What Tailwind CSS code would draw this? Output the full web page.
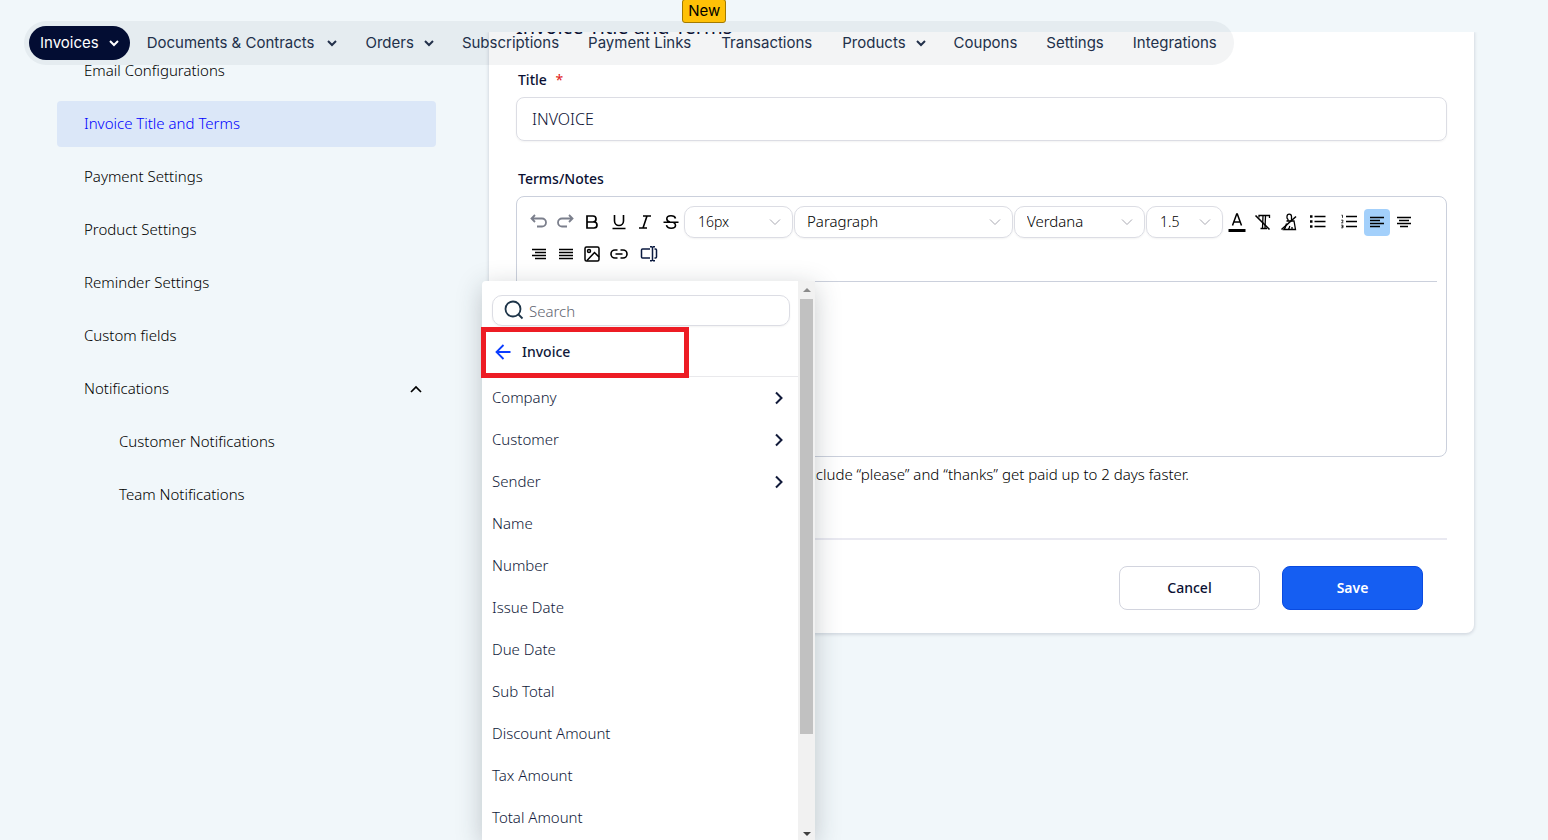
<!DOCTYPE html>
<html lang="en">
<head>
    <meta charset="UTF-8">
    <meta name="viewport" content="width=device-width, initial-scale=1.0">
    <title>Invoice Title and Terms</title>
    <script src="https://cdn.jsdelivr.net/npm/@tailwindcss/browser@4"></script>
</head>
<body class="h-screen overflow-hidden bg-[#f1f7fa] font-['Noto_Sans',sans-serif] text-sm text-[#0b1033]">
    <svg class="hidden">
        <symbol id="down" viewBox="0 0 10 10"><path d="M1 3l4 4 4-4" fill="none" stroke="currentColor" stroke-width="2"/></symbol>
        <symbol id="up" viewBox="0 0 12 12"><path d="M1 9l5-5 5 5" fill="none" stroke="currentColor" stroke-width="1.7"/></symbol>
        <symbol id="thin-down" viewBox="0 0 12 8"><path d="M1 1.5l5 5 5-5" fill="none" stroke="currentColor"/></symbol>
        <symbol id="right" viewBox="0 0 10 14"><path d="M2 1.5L7.5 7 2 12.5" fill="none" stroke="currentColor" stroke-width="2"/></symbol>
    </svg>

    <!-- Top navigation -->
    <header class="absolute inset-x-0 top-0 z-10 pl-6 pt-[21px] font-['Inter',sans-serif] text-[15px] text-[#22304a]">
        <nav class="flex h-11 w-max items-center rounded-full bg-[#1a2e35]/5 pl-[5px] pr-[17px]">
            <a href="#" class="mr-[17px] flex h-[34px] items-center gap-[10px] rounded-full bg-[#030d33] px-[11px] text-white">Invoices<svg class="size-[10px]"><use href="#down"/></svg></a>
            <a href="#" class="mr-[29px] flex items-center gap-3">Documents &amp; Contracts<svg class="size-[10px]"><use href="#down"/></svg></a>
            <a href="#" class="mr-7 flex items-center gap-[10px]">Orders<svg class="size-[10px]"><use href="#down"/></svg></a>
            <a href="#" class="mr-[29px]">Subscriptions</a>
            <a href="#" class="mr-[30px]">Payment Links</a>
            <a href="#" class="relative mr-[30px]">Transactions<span class="absolute -left-[39px] -top-[33px] rounded-[3px] border border-[#a37a00] bg-[#ffc107] px-[5px] text-black">New</span></a>
            <a href="#" class="mr-7 flex items-center gap-[10px]">Products<svg class="size-[10px]"><use href="#down"/></svg></a>
            <a href="#" class="mr-[29px]">Coupons</a>
            <a href="#" class="mr-[29px]">Settings</a>
            <a href="#">Integrations</a>
        </nav>
    </header>

    <div class="mt-8 flex h-full items-start overflow-hidden">
        <!-- Settings sidebar -->
        <aside class="ml-[57px] mr-[53px] flex w-[379px] shrink-0 flex-col gap-[7px] pt-4 text-[15px] font-light text-black">
            <a href="#" class="flex h-[46px] items-center px-[27px]">Email Configurations</a>
            <a href="#" class="flex h-[46px] items-center rounded-sm bg-[#dbe7f8] px-[27px] text-[#0000ff]">Invoice Title and Terms</a>
            <a href="#" class="flex h-[46px] items-center px-[27px]">Payment Settings</a>
            <a href="#" class="flex h-[46px] items-center px-[27px]">Product Settings</a>
            <a href="#" class="flex h-[46px] items-center px-[27px]">Reminder Settings</a>
            <a href="#" class="flex h-[46px] items-center px-[27px]">Custom fields</a>
            <button type="button" class="flex h-[46px] items-center justify-between pl-[27px] pr-[14px]">Notifications<svg class="size-3"><use href="#up"/></svg></button>
            <a href="#" class="flex h-[46px] items-center px-[62px]">Customer Notifications</a>
            <a href="#" class="flex h-[46px] items-center px-[62px]">Team Notifications</a>
        </aside>

        <!-- Form card -->
        <main class="mr-[74px] min-w-0 flex-1 rounded-b-lg bg-white px-[27px] pb-[23px] shadow-[0_1px_3px_1px_#d5dbe2]">
            <h1 class="-mt-[19px] h-7 text-xl leading-7">Invoice Title and Terms</h1>
            <form>
                <label for="title" class="mt-[29px] block pl-[2px] font-medium leading-5">Title <span class="ml-[5px] font-normal text-[#e02020]">*</span></label>
                <input id="title" value="INVOICE" class="mt-[7px] h-11 w-full rounded-lg border border-[#dcdde4] px-[15px] text-base font-light shadow-xs">
                <label for="terms" class="mt-7 block pl-[2px] font-medium leading-5">Terms/Notes</label>

                <div class="mt-[7px] rounded-lg border border-[#cbd0dc]">
                    <div class="mx-[9px] flex flex-wrap items-center border-b border-[#cbd0dc] pb-[11px] pt-[9px] text-black">
                        <button type="button" aria-label="Undo" class="grid h-8 w-[26px] place-items-center text-[#7b7f8c]">
                            <svg viewBox="0 0 18 18" class="size-[18px]" fill="none" stroke="currentColor" stroke-width="1.8"><path d="M5 2L1.500 5.500 5 9M2 5.500h10a4 4 0 0 1 0 8H7"/></svg>
                        </button>
                        <button type="button" aria-label="Redo" class="grid h-8 w-[26px] place-items-center text-[#7b7f8c]">
                            <svg viewBox="0 0 18 18" class="size-[18px]" fill="none" stroke="currentColor" stroke-width="1.8"><path d="M13 2l3.500 3.500L13 9M16 5.500H6a4 4 0 0 0 0 8h5"/></svg>
                        </button>
                        <button type="button" aria-label="Bold" class="grid h-8 w-[27px] place-items-center">
                            <svg viewBox="0 0 18 18" class="size-[18px]" fill="none" stroke="currentColor" stroke-width="1.7"><path d="M4 3h6a3 3 0 0 1 0 6H4zM4 9h7a3 3 0 0 1 0 6H4z"/></svg>
                        </button>
                        <button type="button" aria-label="Underline" class="grid h-8 w-[27px] place-items-center">
                            <svg viewBox="0 0 18 18" class="size-[18px]" fill="none" stroke="currentColor" stroke-width="1.6"><path d="M4.500 2v6a4.500 4.500 0 0 0 9 0V2M2.500 15.500h13"/></svg>
                        </button>
                        <button type="button" aria-label="Italic" class="grid h-8 w-[26px] place-items-center">
                            <svg viewBox="0 0 18 18" class="size-[18px]" fill="none" stroke="currentColor" stroke-width="1.6"><path d="M7 3h8M3 15h8M11 3L7 15"/></svg>
                        </button>
                        <button type="button" aria-label="Strikethrough" class="grid h-8 w-[26px] place-items-center">
                            <svg viewBox="0 0 18 18" class="size-[18px]" fill="none" stroke="currentColor" stroke-width="1.6"><path d="M13.500 5.500C13 3.500 11.500 2.800 9 2.800S4.800 4 4.800 5.800C4.800 7.500 6 8.500 8 9M1.500 9.200h15M11.500 9.500c1.500.7 2 1.600 2 2.700 0 1.800-1.700 3-4.300 3-2.700 0-4.400-1.200-4.700-3"/></svg>
                        </button>
                        <div class="relative mr-px h-8 w-[109px]">
                            <select aria-label="Font size" class="h-full w-full appearance-none rounded-[10px] border border-[#dcdde4] px-[13px] font-light text-black shadow-xs"><option>16px</option></select>
                            <svg class="pointer-events-none absolute right-3 top-3 h-2 w-3 text-[#a9a9b2]"><use href="#thin-down"/></svg>
                        </div>
                        <div class="relative mr-px h-8 w-[219px]">
                            <select aria-label="Block style" class="h-full w-full appearance-none rounded-[10px] border border-[#dcdde4] px-3 text-[15px] font-light text-black shadow-xs"><option>Paragraph</option></select>
                            <svg class="pointer-events-none absolute right-3 top-3 h-2 w-3 text-[#a9a9b2]"><use href="#thin-down"/></svg>
                        </div>
                        <div class="relative mr-px h-8 w-[131px]">
                            <select aria-label="Font family" class="h-full w-full appearance-none rounded-[10px] border border-[#dcdde4] px-3 text-[15px] font-light text-black shadow-xs"><option>Verdana</option></select>
                            <svg class="pointer-events-none absolute right-3 top-3 h-2 w-3 text-[#a9a9b2]"><use href="#thin-down"/></svg>
                        </div>
                        <div class="relative mr-px h-8 w-[77px]">
                            <select aria-label="Line height" class="h-full w-full appearance-none rounded-[10px] border border-[#dcdde4] px-[13px] font-light text-black shadow-xs"><option>1.5</option></select>
                            <svg class="pointer-events-none absolute right-3 top-3 h-2 w-3 text-[#a9a9b2]"><use href="#thin-down"/></svg>
                        </div>
                        <button type="button" aria-label="Text color" class="grid h-8 w-[26px] place-items-center">
                            <svg viewBox="0 0 18 20" class="h-5 w-[18px]" fill="none" stroke="currentColor" stroke-width="1.5"><path d="M4.500 13.500L8.700 2h.6l4.200 11.500M6 10h6"/><path d="M.500 18.500h17" stroke-width="3"/></svg>
                        </button>
                        <button type="button" aria-label="Clear formatting" class="grid h-8 w-[26px] place-items-center">
                            <svg viewBox="0 0 18 18" class="size-[18px]" fill="none" stroke="currentColor" stroke-width="1.300"><path d="M5 4.500V2.500h10.500v2.500M9 3L8.500 15M11.500 3L11 15M6.500 15.500H13"/><path d="M1.500 2.500L15.500 16.500" stroke-width="1.600"/></svg>
                        </button>
                        <button type="button" aria-label="Clear background" class="grid h-8 w-[26px] place-items-center">
                            <svg viewBox="0 0 18 18" class="size-[18px]" fill="none" stroke="currentColor" stroke-width="1.300"><path d="M8 8V6.500L7 5V3.500C7 2 7.800 1.200 9.200 1.200s2.300.8 2.300 2.300V7.500M6.500 8H14l1.500 8.500H4c1.500-1.500 2-4 2.500-6M8.500 16c1-1 1-2 1.200-3M12 16.500V14"/><path d="M1.500 16.500L16 3.500" stroke-width="1.600"/></svg>
                        </button>
                        <button type="button" aria-label="Bulleted list" class="grid h-8 w-8 place-items-center">
                            <svg viewBox="0 0 18 18" class="size-[18px]" fill="none" stroke="currentColor" stroke-width="1.500"><path d="M5.500 3.500h11M5.500 8.500h11M5.500 13.500h11"/><path d="M1 3.500h2.500M1 8.500h2.500M1 13.500h2.500" stroke-width="2.500"/></svg>
                        </button>
                        <button type="button" aria-label="Numbered list" class="grid h-8 w-[30px] place-items-center">
                            <svg viewBox="0 0 18 18" class="size-[18px]" fill="none" stroke="currentColor" stroke-width="1.500"><path d="M6 3.500h11M6 8.500h11M6 13.500h11"/><path d="M1.500 2.200h1v2.600M1.200 7.200h1.800v1.200l-1.500 1.400H3.300M1.200 12.200H3v2.600H1.200M1.700 13.500H3" stroke-width=".8"/></svg>
                        </button>
                        <button type="button" aria-label="Align left" class="grid h-[27px] w-[26px] place-items-center rounded bg-[#a3d0fb]">
                            <svg viewBox="0 0 16 16" class="size-4" fill="none" stroke="currentColor" stroke-width="1.500"><path d="M1 3.500h14M1 6.500h10M1 9.500h14M1 12.500h10"/></svg>
                        </button>
                        <button type="button" aria-label="Align center" class="grid h-8 w-7 place-items-center">
                            <svg viewBox="0 0 16 16" class="size-4" fill="none" stroke="currentColor" stroke-width="1.500"><path d="M1 3.500h14M3 6.500h10M1 9.500h14M4 12.500h8"/></svg>
                        </button>
                        <button type="button" aria-label="Align right" class="grid h-8 w-[26px] place-items-center">
                            <svg viewBox="0 0 16 16" class="size-4" fill="none" stroke="currentColor" stroke-width="1.500"><path d="M1 3.500h14M4 6.500h11M1 9.500h14M4 12.500h11"/></svg>
                        </button>
                        <button type="button" aria-label="Justify" class="grid h-8 w-[27px] place-items-center">
                            <svg viewBox="0 0 16 16" class="size-4" fill="none" stroke="currentColor" stroke-width="1.500"><path d="M1 3.500h14M1 6.500h14M1 9.500h14M1 12.500h14"/></svg>
                        </button>
                        <button type="button" aria-label="Image" class="grid h-8 w-[26px] place-items-center">
                            <svg viewBox="0 0 18 18" class="size-[18px]" fill="none" stroke="currentColor" stroke-width="1.500"><rect x="2" y="2" width="14" height="14" rx="1.500"/><circle cx="6" cy="6" r="1.500"/><path d="M4 15.500l7.500-8 4.500 4.500"/></svg>
                        </button>
                        <button type="button" aria-label="Link" class="grid h-8 w-7 place-items-center">
                            <svg viewBox="0 0 18 18" class="size-[18px]" fill="none" stroke="currentColor" stroke-width="1.600"><path d="M7.500 5H5a4 4 0 0 0 0 8h2.500M10.500 5H13a4 4 0 0 1 0 8h-2.500M5.500 9h7"/></svg>
                        </button>
                        <button type="button" aria-label="Insert variable" class="grid h-8 w-8 place-items-center text-[#0b1a40]">
                            <svg viewBox="0 0 18 18" class="size-[18px]" fill="none" stroke="currentColor" stroke-width="1.500"><path d="M10 4H2.500a1 1 0 0 0-1 1v7a1 1 0 0 0 1 1H10M14.500 4h1a1 1 0 0 1 1 1v7a1 1 0 0 1-1 1h-1M12.500 2v13M10 1.700h1.500l1 .8 1-.8H15M10 15.800h1.500l1-.8 1 .8H15"/></svg>
                        </button>
                    </div>
                    <textarea id="terms" class="block h-[174px] w-full resize-none rounded-lg px-4 py-3 outline-none"></textarea>
                </div>

                <p class="w-[673px] pt-[7px] text-right text-[15px] font-light leading-5 text-black">Invoices that include “please” and “thanks” get paid up to 2 days faster.</p>
                <div class="mt-[54px] flex justify-end gap-[22px] border-t-2 border-[#e9e9f1] pr-6 pt-[26px] font-medium">
                    <button type="button" class="h-11 w-[141px] rounded-lg border border-[#d2d4de] bg-white">Cancel</button>
                    <button type="submit" class="h-11 w-[141px] rounded-lg border border-[#0a4be0] bg-[#155ef2] font-semibold text-white">Save</button>
                </div>
            </form>
        </main>
    </div>

    <!-- Variable picker -->
    <div class="absolute bottom-0 left-[482px] top-[281px] flex w-[333px] rounded-tl bg-white text-[15px] font-light text-[#111a3a] shadow-[0_6px_26px_rgba(40,50,60,0.25)]">
        <div class="min-w-0 flex-1 overflow-hidden">
            <div class="relative ml-[10px] mr-2 mt-[14px]">
                <svg viewBox="0 0 20 20" class="absolute left-3 top-[5px] size-5 text-[#1d3448]" fill="none" stroke="currentColor" stroke-width="1.800"><circle cx="9" cy="9" r="7.500"/><path d="M14.500 14.500l4 4"/></svg>
                <input type="search" aria-label="Search" placeholder="Search" class="h-[31px] w-full rounded-[10px] border border-[#dcdde4] pl-9 pr-3 shadow-xs placeholder:text-[#5f6470]">
            </div>
            <div class="flex h-[51px] items-center gap-[11px] border-b border-[#e9e9ec] pl-[13px] pt-[2px]">
                <button type="button" aria-label="Back" class="text-[#0a3cff]"><svg viewBox="0 0 16 16" class="size-4" fill="none" stroke="currentColor" stroke-width="1.800"><path d="M8.500 1L1.500 8l7 7M1.500 8h14"/></svg></button>
                <span class="text-sm font-medium">Invoice</span>
            </div>
            <ul>
                <li><button type="button" class="flex h-[42px] w-full items-center justify-between pl-[10px] pr-[14px]">Company<svg class="h-[14px] w-[10px]"><use href="#right"/></svg></button></li>
                <li><button type="button" class="flex h-[42px] w-full items-center justify-between pl-[10px] pr-[14px]">Customer<svg class="h-[14px] w-[10px]"><use href="#right"/></svg></button></li>
                <li><button type="button" class="flex h-[42px] w-full items-center justify-between pl-[10px] pr-[14px]">Sender<svg class="h-[14px] w-[10px]"><use href="#right"/></svg></button></li>
                <li><button type="button" class="flex h-[42px] w-full items-center pl-[10px]">Name</button></li>
                <li><button type="button" class="flex h-[42px] w-full items-center pl-[10px]">Number</button></li>
                <li><button type="button" class="flex h-[42px] w-full items-center pl-[10px]">Issue Date</button></li>
                <li><button type="button" class="flex h-[42px] w-full items-center pl-[10px]">Due Date</button></li>
                <li><button type="button" class="flex h-[42px] w-full items-center pl-[10px]">Sub Total</button></li>
                <li><button type="button" class="flex h-[42px] w-full items-center pl-[10px]">Discount Amount</button></li>
                <li><button type="button" class="flex h-[42px] w-full items-center pl-[10px]">Tax Amount</button></li>
                <li><button type="button" class="flex h-[42px] w-full items-center pl-[10px]">Total Amount</button></li>
            </ul>
        </div>
        <!-- Scrollbar -->
        <div class="flex w-[17px] flex-col items-center bg-[#f1f1f1]">
            <svg viewBox="0 0 8 4" class="my-[7px] h-1 w-2 shrink-0 fill-[#8b8b8b]"><path d="M0 4l4-4 4 4z"/></svg>
            <div class="h-[435px] w-[13px] bg-[#c1c1c1]"></div>
            <svg viewBox="0 0 8 4" class="mb-1 mt-auto h-1 w-2 shrink-0 fill-[#404040]"><path d="M0 0l4 4 4-4z"/></svg>
        </div>
        <!-- Highlight around the group header -->
        <div class="pointer-events-none absolute -left-px top-[46px] h-[51px] w-[208px] border-[5px] border-[#ed1c24]"></div>
    </div>
</body>
</html>
